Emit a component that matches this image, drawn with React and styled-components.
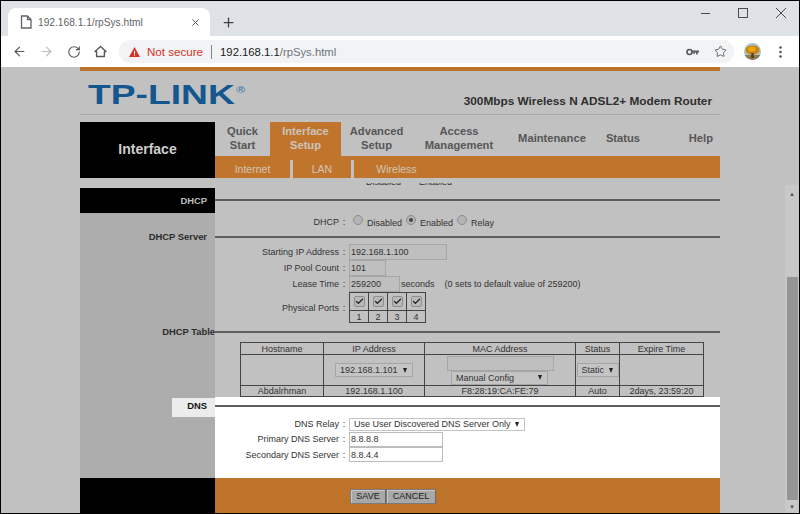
import styled, { createGlobalStyle } from 'styled-components'
import { ArrowLeft, ArrowRight, Check, Plus, RotateCw, Star, X } from 'lucide-react'

const GlobalStyle = createGlobalStyle`
  html, body {
    margin: 0;
    padding: 0;
    background: #000;
  }
  * {
    box-sizing: border-box;
  }
`

const Window = styled.div`
  background: #c1c1c1;
  border: 1px solid #000;
  display: flex;
  flex-direction: column;
  font-family: 'Liberation Sans', Arial, sans-serif;
  height: 514px;
  overflow: hidden;
  width: 800px;
`

const TitleBar = styled.div`
  align-items: flex-end;
  background: #dee1e6;
  display: flex;
  flex: 0 0 35px;
  padding-left: 7px;
  position: relative;
`

const Tab = styled.div`
  align-items: center;
  background: #fff;
  border-radius: 8px 8px 0 0;
  color: #5f6368;
  display: flex;
  font-size: 10.2px;
  height: 28px;
  padding: 0 9px 0 12px;
  width: 202px;
`

const TabTitle = styled.span`
  flex: 1;
  margin-left: 6px;
`

const NewTab = styled.div`
  align-items: center;
  color: #3c4043;
  display: flex;
  height: 28px;
  justify-content: center;
  margin-left: 9px;
  width: 18px;
`

const WindowControls = styled.div`
  align-items: center;
  color: #4a4c50;
  display: flex;
  gap: 28px;
  margin-left: auto;
  padding: 0 13px 18px 0;
`

const MinimizeGlyph = styled.span`
  background: #4a4c50;
  display: block;
  height: 1px;
  width: 9px;
`

const MaximizeGlyph = styled.span`
  border: 1px solid #4a4c50;
  display: block;
  height: 10px;
  width: 10px;
`

const Toolbar = styled.div`
  align-items: center;
  background: #fff;
  display: flex;
  flex: 0 0 31px;
  padding-left: 5px;
`

const NavButton = styled.span`
  align-items: center;
  color: ${p => (p.$disabled ? '#b9bcc0' : '#55585c')};
  display: flex;
  justify-content: center;
  width: 27px;
`

const UrlPill = styled.div`
  align-items: center;
  background: #f1f3f4;
  border-radius: 12px;
  display: flex;
  flex: 1;
  font-size: 11.3px;
  height: 23px;
  margin-left: 5px;
  padding: 0 7px 0 10px;
`

const NotSecure = styled.span`
  color: #d93025;
  font-size: 11.6px;
  margin-left: 7px;
`

const UrlDivider = styled.span`
  background: #80868b;
  height: 14px;
  margin: 0 8px;
  width: 1px;
`

const UrlHost = styled.span`
  color: #202124;
`

const UrlPath = styled.span`
  color: #70757a;
`

const PillIcons = styled.div`
  align-items: center;
  color: #55585c;
  display: flex;
  gap: 15px;
  margin-left: auto;
`

const ToolbarEnd = styled.div`
  align-items: center;
  display: flex;
  flex: 0 0 65px;
  gap: 18px;
  padding-left: 10px;
`

const Page = styled.div`
  display: flex;
  flex: 1;
  flex-direction: column;
  min-height: 0;
`

const RouterHeader = styled.header`
  border-top: 4px solid #bd732a;
  margin-left: 79px;
  width: 640px;
`

const BrandRow = styled.div`
  align-items: flex-end;
  border-bottom: 1px solid #a9a9a9;
  display: flex;
  height: 44px;
  justify-content: space-between;
  padding: 0 8px 6px 8px;
`

const Logo = styled.div`
  color: #14578e;
  font-size: 28px;
  font-weight: 700;
  line-height: 24px;
  margin-bottom: 1px;
  transform: scaleX(1.33);
  transform-origin: left center;
  white-space: nowrap;

  sup {
    color: #4b7fa8;
    font-size: 9px;
    font-weight: 700;
    line-height: 0;
    margin-left: 1px;
    vertical-align: 11px;
  }
`

const Tagline = styled.div`
  color: #2f2f2f;
  font-size: 11.8px;
  font-weight: 700;
  line-height: 14px;
`

const MenuBlock = styled.div`
  display: grid;
  grid-template-columns: 135px 1fr;
  margin-top: 7px;
`

const MenuTitle = styled.div`
  align-items: center;
  background: #000;
  color: #cfcfcf;
  display: flex;
  font-size: 14px;
  font-weight: 700;
  height: 56px;
  justify-content: center;
  padding-bottom: 2px;
`

const MenuColumn = styled.div`
  display: flex;
  flex-direction: column;
`

const MainTabs = styled.nav`
  display: flex;
  height: 34px;
`

const MainTab = styled.div`
  align-items: center;
  background: ${p => (p.$active ? '#c1752c' : 'transparent')};
  color: ${p => (p.$active ? '#c9c4bd' : '#565656')};
  display: flex;
  flex: 0 0 ${p => p.$w}px;
  font-size: 11.2px;
  font-weight: 700;
  justify-content: ${p => (p.$end ? 'flex-end' : 'center')};
  line-height: 13.5px;
  padding: 0 ${p => (p.$end ? 7 : 0)}px 1px 0;
  text-align: center;
`

const SubTabs = styled.div`
  background: #c1752c;
  display: flex;
  height: 22px;
  padding-top: 4px;
`

const SubTab = styled.div`
  border-right: ${p => (p.$last ? 'none' : '3px solid #c1c1c1')};
  color: #d0c5b8;
  font-size: 10.5px;
  line-height: 18px;
  text-align: center;
  width: ${p => p.$w}px;
`

const ScrollArea = styled.div`
  display: flex;
  flex: 1;
  justify-content: space-between;
  min-height: 0;
`

const Content = styled.main`
  display: flex;
  flex-direction: column;
  margin-left: 79px;
  width: 640px;
`

// the radio row that has scrolled under the menu, only its lowest pixels still show
const ClippedRow = styled.div`
  display: flex;
  flex: 0 0 10px;
  padding-top: 5px;
`

const ClippedText = styled.div`
  color: #333;
  display: flex;
  font-size: 9px;
  gap: 18px;
  height: 4px;
  line-height: 10px;
  overflow: hidden;
  padding-left: 286px;

  span {
    margin-top: -6px;
  }
`

const Row = styled.div`
  display: grid;
  flex: 0 0 ${p => p.$h}px;
  grid-template-columns: 135px 1fr;
  height: ${p => p.$h}px;
`

const Side = styled.div`
  background: ${p => (p.$black ? '#000' : '#adadad')};
  color: ${p => (p.$black ? '#bdbdbd' : '#2c2c2c')};
  font-size: 9.4px;
  font-weight: 700;
  line-height: 13px;
  padding-right: ${p => (p.$flush ? 0 : 8)}px;
  padding-top: ${p => p.$top ?? 0}px;
  text-align: right;
  white-space: nowrap;
`

const DnsSide = styled.div`
  align-self: stretch;
  background: #adadad;
  display: flex;
  justify-content: flex-end;
  padding-top: 1px;
`

const DnsLabel = styled.div`
  background: #ececec;
  color: #111;
  font-size: 9.4px;
  font-weight: 700;
  line-height: 16px;
  padding-right: 8px;
  text-align: right;
  width: 43px;
`

const Main = styled.div`
  background: ${p => (p.$white ? '#fff' : 'transparent')};
`

const RuleMain = styled(Main)`
  align-items: flex-start;
  display: flex;
  padding-top: ${p => p.$top}px;
`

const Rule = styled.div`
  background: #5e5e5e;
  flex: 1;
  height: 2px;
`

const FieldMain = styled(Main)`
  align-items: center;
  color: #333;
  display: grid;
  font-size: 9px;
  grid-template-columns: 124px 10px 1fr;
`

const FieldLabel = styled.label`
  text-align: right;
  white-space: nowrap;
`

const Colon = styled.span`
  text-align: center;
`

const FieldValue = styled.div`
  align-items: center;
  display: flex;
  gap: 1px;
`

const TextBox = styled.input`
  background: ${p => (p.$white ? '#fff' : '#bfbfbf')};
  border: 1px solid ${p => (p.$white ? '#bdbdbd' : '#a6a6a6')};
  color: #333;
  font-family: inherit;
  font-size: 9px;
  height: ${p => p.$h ?? 16}px;
  outline: none;
  padding: 0 1px;
  width: ${p => p.$w}px;
`

const RadioGroup = styled.div`
  align-items: center;
  display: flex;
  gap: 3px;
  padding-left: 4px;
`

const Radio = styled.span`
  background: #b4b4b4;
  border: 1px solid #8d8d8d;
  border-radius: 50%;
  display: inline-block;
  flex: none;
  height: 10px;
  margin: 0 1px 4px ${p => p.$gap ?? 0}px;
  position: relative;
  width: 10px;

  &::after {
    background: #444;
    border-radius: 50%;
    content: '';
    display: ${p => (p.$on ? 'block' : 'none')};
    height: 4px;
    left: 2px;
    position: absolute;
    top: 2px;
    width: 4px;
  }
`

const RadioText = styled.span`
  margin-top: 2px;
`

const Hint = styled.span`
  margin-left: 9px;
  white-space: pre;
`

const PortsTable = styled.table`
  border-collapse: collapse;
  color: #333;
  font-size: 9px;
  table-layout: fixed;
  width: 77px;

  td {
    border: 1.5px solid #444;
    height: 12px;
    line-height: 10px;
    padding: 0;
    text-align: center;
  }
`

const PortCheckCell = styled.td`
  && {
    height: 18px;
  }
`

const CheckBox = styled.span`
  align-items: center;
  background: #b9b9b9;
  border: 1px solid #8d8d8d;
  border-radius: 2px;
  color: #222;
  display: inline-flex;
  height: 11px;
  justify-content: center;
  vertical-align: middle;
  width: 11px;
`

const TableWrap = styled.div`
  padding-left: 25px;
`

const DhcpTable = styled.table`
  border-collapse: collapse;
  color: #333;
  font-size: 9px;
  table-layout: fixed;
  width: 463px;

  th,
  td {
    border: 1.5px solid #444;
    font-weight: 400;
    line-height: 10px;
    padding: 0;
    text-align: center;
  }
`

const HeadRow = styled.tr`
  height: 12px;
`

const FormTableRow = styled.tr`
  height: 31px;
`

const LeaseRow = styled.tr`
  height: 11px;
`

const SelectBox = styled.div`
  align-items: center;
  background: ${p => (p.$white ? '#fff' : '#c4c4c4')};
  border: 1px solid ${p => (p.$white ? '#c4c4c4' : '#a6a6a6')};
  color: #333;
  display: inline-flex;
  font-size: 9px;
  height: ${p => p.$h ?? 14}px;
  justify-content: space-between;
  padding: 0 5px 0 4px;
  white-space: nowrap;
  width: ${p => p.$w}px;

  &::after {
    border-left: 2.5px solid transparent;
    border-right: 2.5px solid transparent;
    border-top: 5px solid #222;
    content: '';
    flex: none;
  }
`

const MacCell = styled.div`
  display: flex;
  flex-direction: column;
  padding-left: 22px;
`

const MacInput = styled.div`
  background: #bfbfbf;
  border: 1px solid #a6a6a6;
  height: 15px;
  width: 107px;
`

const MacSelect = styled(SelectBox)`
  margin-left: 4px;
`

const Footer = styled.div`
  display: grid;
  flex: 1;
  grid-template-columns: 135px 1fr;
`

const FooterSide = styled.div`
  background: #000;
`

const FooterMain = styled.div`
  align-items: flex-start;
  background: #bd732a;
  display: flex;
  padding: 11px 0 0 135px;
`

const FlatButton = styled.button`
  background: #a8a8a8;
  border: 1px solid #7a7a7a;
  border-right-color: #666;
  box-shadow: inset 1px 1px 0 #c8c8c8;
  color: #222;
  font-family: inherit;
  font-size: 9px;
  height: 15px;
  line-height: 11px;
  padding: 0;
  width: ${p => p.$w}px;
`

const Scrollbar = styled.div`
  background: #c8c8c8;
  display: flex;
  flex: 0 0 14px;
  flex-direction: column;
  margin-top: 7px;
`

const ScrollArrow = styled.div`
  align-items: center;
  color: #555;
  display: flex;
  flex: 0 0 ${p => p.$h}px;
  font-size: 6px;
  justify-content: center;
`

const ScrollThumb = styled.div`
  background: #959595;
  flex: 1;
  margin: 75px 1px 0 2px;
`

const DocIcon = () => (
  <svg width='12' height='14' viewBox='0 0 12 14' fill='none' stroke='#5f6368' strokeWidth='1.3'>
    <path d='M1.5 1h6L11 4.5V13H1.5z' />
    <path d='M7.5 1v3.5H11' />
  </svg>
)

const WarningIcon = () => (
  <svg width='11' height='10' viewBox='0 0 12 11'>
    <path d='M6 0l6 11H0z' fill='#d93025' />
    <path d='M5.4 4h1.2v3.6H5.4zM5.4 8.3h1.2v1.2H5.4z' fill='#fff' />
  </svg>
)

const KeyIcon = () => (
  <svg width='13' height='8' viewBox='0 0 13 8' fill='none'>
    <circle cx='3.5' cy='4' r='2.5' stroke='#55585c' strokeWidth='1.6' />
    <path d='M6 2.6h7v2h-1.3v2h-1.6v-2H8.8v1.4H7.4V4.6H6z' fill='#55585c' />
  </svg>
)

const HomeIcon = () => (
  <svg width='13' height='13' viewBox='0 0 13 13' fill='none' stroke='#55585c' strokeWidth='1.4' strokeLinejoin='round'>
    <path d='M6.5 1.5L12 6.5h-1.6v5H2.6v-5H1z' />
  </svg>
)

const CloseIcon = () => (
  <svg width='10' height='10' viewBox='0 0 10 10' stroke='#4a4c50' strokeWidth='1'>
    <path d='M0 0l10 10M10 0L0 10' />
  </svg>
)

const Avatar = () => (
  <svg width='17' height='17' viewBox='0 0 17 17'>
    <defs>
      <clipPath id='avatar-clip'>
        <circle cx='8.5' cy='8.5' r='8.5' />
      </clipPath>
    </defs>
    <g clipPath='url(#avatar-clip)'>
      <rect width='17' height='17' fill='#a9c3c4' />
      <rect y='12' width='17' height='5' fill='#8d7a55' />
      <ellipse cx='8.5' cy='7' rx='7' ry='4.6' fill='#c9820f' />
      <ellipse cx='8' cy='6' rx='4' ry='2.6' fill='#e9a514' />
      <path d='M7.5 10h2l.6 5H7z' fill='#5b3c14' />
    </g>
  </svg>
)

const MenuDots = () => (
  <svg width='3' height='12' viewBox='0 0 3 12' fill='#55585c'>
    <circle cx='1.5' cy='1.5' r='1.3' />
    <circle cx='1.5' cy='6' r='1.3' />
    <circle cx='1.5' cy='10.5' r='1.3' />
  </svg>
)

const mainTabs = [
  { label: ['Quick', 'Start'], w: 55 },
  { label: ['Interface', 'Setup'], w: 71, active: true },
  { label: ['Advanced', 'Setup'], w: 71 },
  { label: ['Access', 'Management'], w: 94 },
  { label: ['Maintenance'], w: 92 },
  { label: ['Status'], w: 50 },
  { label: ['Help'], w: 72, end: true },
]

const Field = ({ label, white, h, children }) => (
  <Row $h={h}>
    <Side />
    <FieldMain $white={white}>
      <FieldLabel>{label}</FieldLabel>
      <Colon>:</Colon>
      <FieldValue>{children}</FieldValue>
    </FieldMain>
  </Row>
)

const App = () => (
  <Window>
    <GlobalStyle />
    <TitleBar>
      <Tab>
        <DocIcon />
        <TabTitle>192.168.1.1/rpSys.html</TabTitle>
        <X size={11} strokeWidth={2} color='#4a4c50' />
      </Tab>
      <NewTab>
        <Plus size={15} strokeWidth={2} />
      </NewTab>
      <WindowControls>
        <MinimizeGlyph />
        <MaximizeGlyph />
        <CloseIcon />
      </WindowControls>
    </TitleBar>
    <Toolbar>
      <NavButton>
        <ArrowLeft size={15} strokeWidth={1.8} />
      </NavButton>
      <NavButton $disabled>
        <ArrowRight size={15} strokeWidth={1.8} />
      </NavButton>
      <NavButton>
        <RotateCw size={14} strokeWidth={2} />
      </NavButton>
      <NavButton>
        <HomeIcon />
      </NavButton>
      <UrlPill>
        <WarningIcon />
        <NotSecure>Not secure</NotSecure>
        <UrlDivider />
        <UrlHost>192.168.1.1</UrlHost>
        <UrlPath>/rpSys.html</UrlPath>
        <PillIcons>
          <KeyIcon />
          <Star size={13} strokeWidth={1.6} />
        </PillIcons>
      </UrlPill>
      <ToolbarEnd>
        <Avatar />
        <MenuDots />
      </ToolbarEnd>
    </Toolbar>
    <Page>
      <RouterHeader>
        <BrandRow>
          <Logo>
            TP-LINK<sup>®</sup>
          </Logo>
          <Tagline>300Mbps Wireless N ADSL2+ Modem Router</Tagline>
        </BrandRow>
        <MenuBlock>
          <MenuTitle>Interface</MenuTitle>
          <MenuColumn>
            <MainTabs>
              {mainTabs.map(({ label, w, active, end }) => (
                <MainTab key={label[0]} $w={w} $active={active} $end={end}>
                  <span>
                    {label[0]}
                    {label[1] && <br />}
                    {label[1]}
                  </span>
                </MainTab>
              ))}
            </MainTabs>
            <SubTabs>
              <SubTab $w={78}>Internet</SubTab>
              <SubTab $w={61}>LAN</SubTab>
              <SubTab $w={85} $last>Wireless</SubTab>
            </SubTabs>
          </MenuColumn>
        </MenuBlock>
      </RouterHeader>
      <ScrollArea>
        <Content>
          <ClippedRow>
            <ClippedText>
              <span>Disabled</span>
              <span>Enabled</span>
            </ClippedText>
          </ClippedRow>
          <Row $h={25}>
            <Side $black $top={6}>DHCP</Side>
            <RuleMain $top={11}>
              <Rule />
            </RuleMain>
          </Row>
          <Field label='DHCP' h={17}>
            <RadioGroup>
              <Radio />
              <RadioText>Disabled</RadioText>
              <Radio $on $gap={1} />
              <RadioText>Enabled</RadioText>
              <Radio $gap={1} />
              <RadioText>Relay</RadioText>
            </RadioGroup>
          </Field>
          <Row $h={14}>
            <Side>DHCP Server</Side>
            <RuleMain $top={6}>
              <Rule />
            </RuleMain>
          </Row>
          <Field label='Starting IP Address' h={16}>
            <TextBox readOnly value='192.168.1.100' $w={98} />
          </Field>
          <Field label='IP Pool Count' h={16}>
            <TextBox readOnly value='101' $w={37} />
          </Field>
          <Field label='Lease Time' h={16}>
            <TextBox readOnly value='259200' $w={51} />
            seconds
            <Hint>(0 sets to default value of 259200)</Hint>
          </Field>
          <Field label='Physical Ports' h={31}>
            <PortsTable>
              <tbody>
                <tr>
                  {[1, 2, 3, 4].map(n => (
                    <PortCheckCell key={n}>
                      <CheckBox>
                        <Check size={9} strokeWidth={3.5} />
                      </CheckBox>
                    </PortCheckCell>
                  ))}
                </tr>
                <tr>
                  {[1, 2, 3, 4].map(n => (
                    <td key={n}>{n}</td>
                  ))}
                </tr>
              </tbody>
            </PortsTable>
          </Field>
          <Row $h={19}>
            <Side $flush $top={2}>DHCP Table</Side>
            <RuleMain $top={8}>
              <Rule />
            </RuleMain>
          </Row>
          <Row $h={55}>
            <Side />
            <TableWrap>
              <DhcpTable>
                <colgroup>
                  <col width='83' />
                  <col width='101' />
                  <col width='151' />
                  <col width='44' />
                  <col width='84' />
                </colgroup>
                <thead>
                  <HeadRow>
                    <th>Hostname</th>
                    <th>IP Address</th>
                    <th>MAC Address</th>
                    <th>Status</th>
                    <th>Expire Time</th>
                  </HeadRow>
                </thead>
                <tbody>
                  <FormTableRow>
                    <td />
                    <td>
                      <SelectBox $w={78}>192.168.1.101</SelectBox>
                    </td>
                    <td>
                      <MacCell>
                        <MacInput />
                        <MacSelect $w={97}>Manual Config</MacSelect>
                      </MacCell>
                    </td>
                    <td>
                      <SelectBox $w={42}>Static</SelectBox>
                    </td>
                    <td />
                  </FormTableRow>
                  <LeaseRow>
                    <td>Abdalrhman</td>
                    <td>192.168.1.100</td>
                    <td>F8:28:19:CA:FE:79</td>
                    <td>Auto</td>
                    <td>2days, 23:59:20</td>
                  </LeaseRow>
                </tbody>
              </DhcpTable>
            </TableWrap>
          </Row>
          <Row $h={20}>
            <DnsSide>
              <DnsLabel>DNS</DnsLabel>
            </DnsSide>
            <RuleMain $white $top={8}>
              <Rule />
            </RuleMain>
          </Row>
          <Field label='DNS Relay' h={14} white>
            <SelectBox $white $w={176} $h={13}>Use User Discovered DNS Server Only</SelectBox>
          </Field>
          <Field label='Primary DNS Server' h={16} white>
            <TextBox readOnly $white value='8.8.8.8' $w={94} $h={15} />
          </Field>
          <Field label='Secondary DNS Server' h={15} white>
            <TextBox readOnly $white value='8.8.4.4' $w={94} $h={15} />
          </Field>
          <Row $h={16}>
            <Side />
            <Main $white />
          </Row>
          <Footer>
            <FooterSide />
            <FooterMain>
              <FlatButton $w={36}>SAVE</FlatButton>
              <FlatButton $w={50}>CANCEL</FlatButton>
            </FooterMain>
          </Footer>
        </Content>
        <Scrollbar>
          <ScrollArrow $h={17}>▲</ScrollArrow>
          <ScrollThumb />
          <ScrollArrow $h={13}>▼</ScrollArrow>
        </Scrollbar>
      </ScrollArea>
    </Page>
  </Window>
)

export default App
